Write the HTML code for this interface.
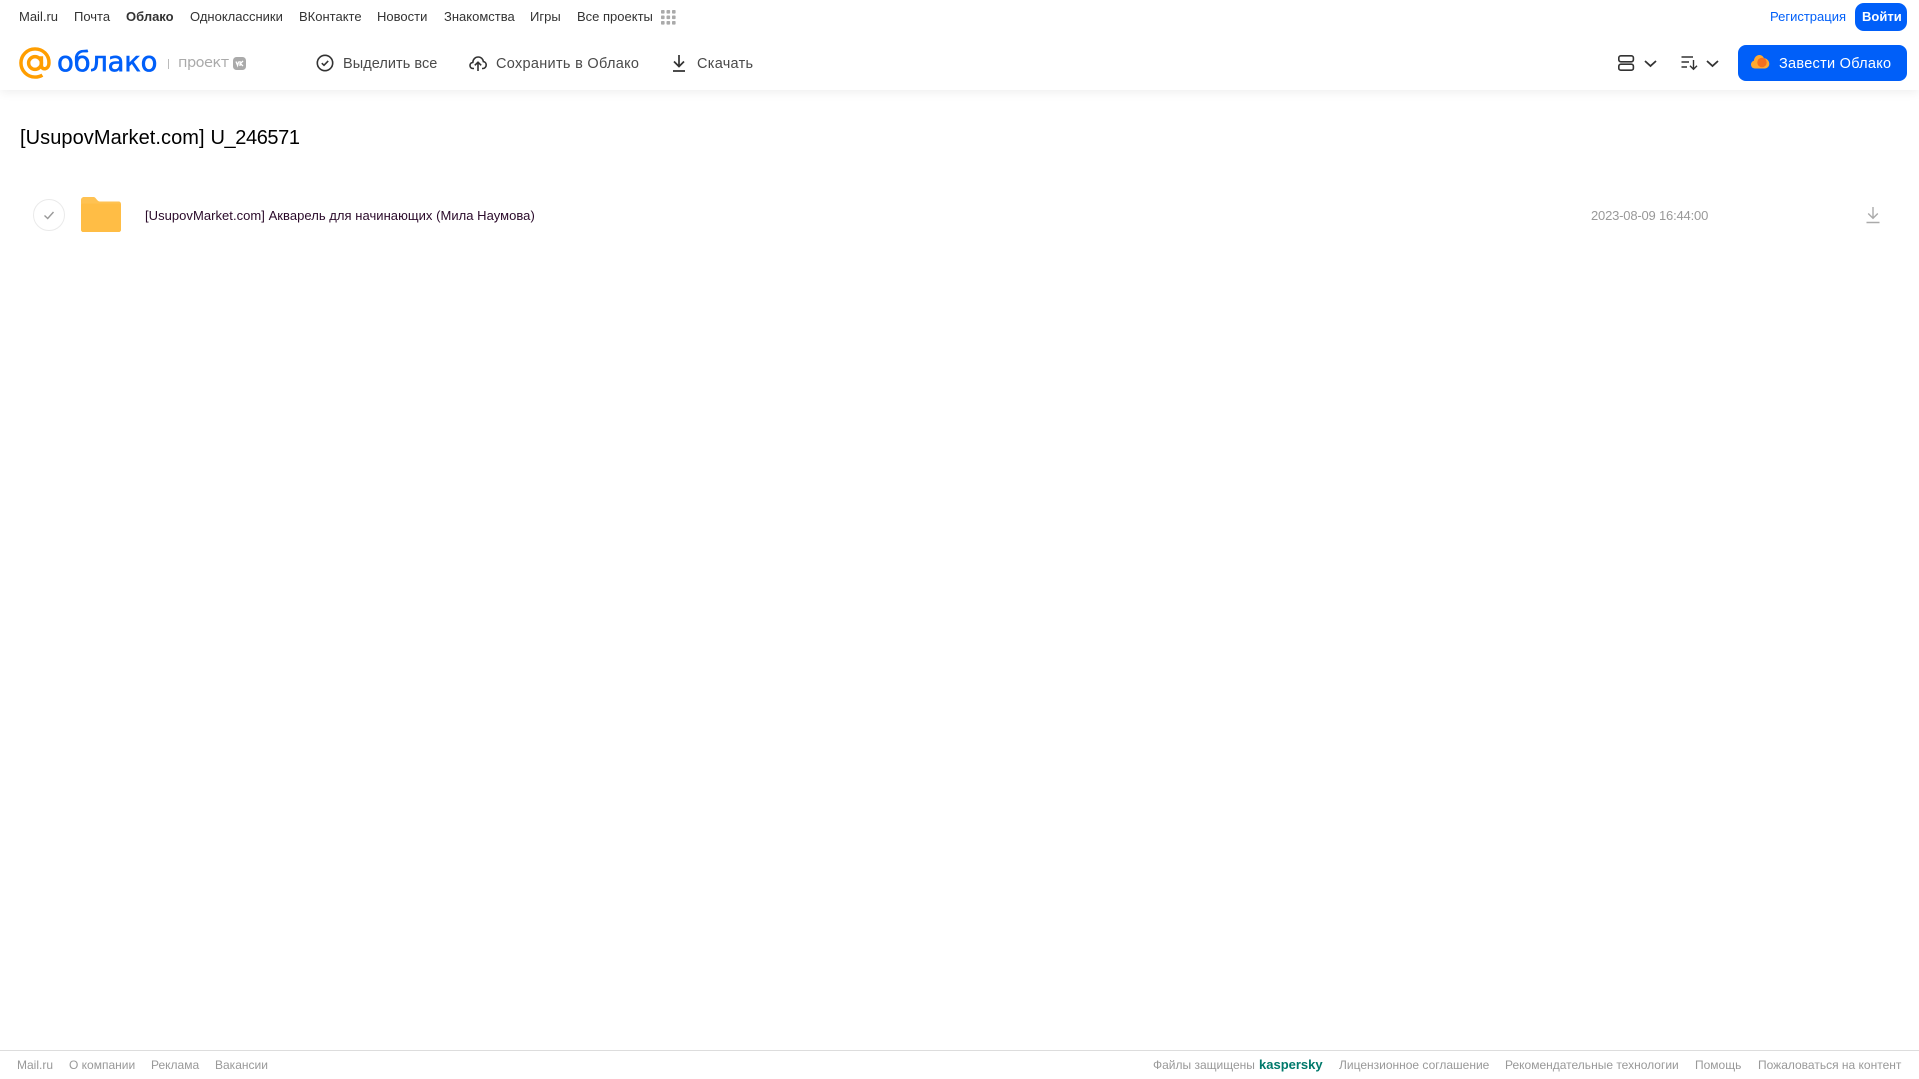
<!DOCTYPE html>
<html lang="ru"><head><meta charset="utf-8"><title>Облако</title>
<style>
html,body{margin:0;padding:0;background:#fff}
body{width:1919px;height:1079px;position:relative;overflow:hidden;font-family:"Liberation Sans","Noto Sans CJK SC",sans-serif}
.t{position:absolute;white-space:nowrap;line-height:20px}
.n{top:7px;font-size:13px;color:#333}
.b{top:54px;font-size:14.5px;color:#4a4a4a;letter-spacing:.3px}
.f{top:1055px;font-size:12px;color:#999}
svg{position:absolute;overflow:visible}
#hd{position:absolute;left:0;top:0;width:1919px;height:90px;background:#fff;box-shadow:0 2px 10px rgba(0,0,0,.07)}
</style></head><body>
<div id="hd"></div>
<span class="t n" style="left:19px">Mail.ru</span>
<span class="t n" style="left:74px">Почта</span>
<span class="t n" style="left:126px;font-weight:bold">Облако</span>
<span class="t n" style="left:190px">Одноклассники</span>
<span class="t n" style="left:299px">ВКонтакте</span>
<span class="t n" style="left:377px">Новости</span>
<span class="t n" style="left:444px">Знакомства</span>
<span class="t n" style="left:530px">Игры</span>
<span class="t n" style="left:577px">Все проекты</span>
<svg style="left:661px;top:10px" width="15" height="15" fill="#aaa"><rect x="0" y="0" width="3.6" height="3.6" rx=".8"/><rect x="5.5" y="0" width="3.6" height="3.6" rx=".8"/><rect x="11" y="0" width="3.6" height="3.6" rx=".8"/><rect x="0" y="5.5" width="3.6" height="3.6" rx=".8"/><rect x="5.5" y="5.5" width="3.6" height="3.6" rx=".8"/><rect x="11" y="5.5" width="3.6" height="3.6" rx=".8"/><rect x="0" y="11" width="3.6" height="3.6" rx=".8"/><rect x="5.5" y="11" width="3.6" height="3.6" rx=".8"/><rect x="11" y="11" width="3.6" height="3.6" rx=".8"/></svg>
<span class="t n" style="left:1770px;color:#005ff9">Регистрация</span>
<div style="position:absolute;left:1855px;top:3px;width:52px;height:28px;border-radius:9px;background:#005ff9"></div>
<span class="t n" style="left:1862px;color:#fff;font-weight:bold">Войти</span>

<svg style="left:19px;top:47px" width="32" height="32" viewBox="0 0 33 33" fill="none" stroke="#ff9e00" stroke-width="3.6"><circle cx="16.5" cy="16.5" r="6.6"/><path d="M23.1 9.5v9.5c0 5 7.6 5 7.8-2.5C31.2 8 24.5 2 16.5 2 8.5 2 2 8.5 2 16.5S8.5 31 16.5 31c3 0 5.5-.7 7.6-2"/></svg>
<span class="t" style="left:57px;top:46px;font-size:27.5px;line-height:32px;color:#005ff9;font-family:'DejaVu Sans',sans-serif;letter-spacing:-.25px;-webkit-text-stroke:.6px #005ff9">облако</span>
<div style="position:absolute;left:168px;top:59px;width:1px;height:10px;background:#bbb"></div>
<span class="t" style="left:178px;top:53px;font-size:14.5px;color:#aaa;font-family:'DejaVu Sans',sans-serif;letter-spacing:-.5px">проект</span>
<div style="position:absolute;left:233px;top:57px;width:13px;height:13px;border-radius:3.5px;background:#aaa"></div>
<svg style="left:233px;top:57px" width="13" height="13" fill="none" stroke="#fff" stroke-width="1.3"><path d="M3 4.500 4.600 8.500 5.600 4.500M7 4v5M10 4 7.400 6.600 10 9"/></svg>

<svg style="left:316px;top:54px" width="18" height="18" viewBox="0 0 18 18" fill="none" stroke="#333" stroke-width="1.6"><circle cx="9" cy="9" r="7.7"/><path d="M5.800 9.200 8 11.300 12.200 6.900"/></svg>
<span class="t b" style="left:343px;letter-spacing:.05px">Выделить все</span>
<svg style="left:469px;top:54px" width="18" height="18" viewBox="0 0 18 18" fill="none" stroke="#333" stroke-width="1.6"><path d="M5 14.500H4C2 14.500 1 13 1 11.400 1 9.700 2.300 8.500 3.800 8.400 4 5 6.500 3 9.200 3c2.800 0 4.800 2 5.200 4.600 1.700.2 2.800 1.700 2.800 3.300 0 1.900-1.300 3.600-3.200 3.600H13"/><path d="M9 17V8.500M5.800 11.300 9 8.200l3.200 3.100"/></svg>
<span class="t b" style="left:496px">Сохранить в Облако</span>
<svg style="left:671px;top:54px" width="16" height="18" viewBox="0 0 16 18" fill="none" stroke="#333" stroke-width="1.7"><path d="M8 1v11M3 7.500 8 12.500 13 7.500M2 17H14"/></svg>
<span class="t b" style="left:697px;letter-spacing:.28px">Скачать</span>

<svg style="left:1618px;top:55px" width="16" height="16" fill="none" stroke="#333" stroke-width="1.6"><rect x=".8" y=".8" width="14.600" height="6" rx="2"/><rect x=".8" y="9.200" width="14.600" height="6" rx="2"/></svg>
<svg style="left:1644px;top:60px" width="13" height="8" fill="none" stroke="#333" stroke-width="1.8"><path d="M1 1 6.500 6 12 1"/></svg>
<svg style="left:1681px;top:55px" width="17" height="16" fill="none" stroke="#333" stroke-width="1.4"><path d="M.5 2H12M.5 7H8M.5 12H6M12.500 5V14M9 10.700 12.500 14.200 16 10.700"/></svg>
<svg style="left:1706px;top:60px" width="13" height="8" fill="none" stroke="#333" stroke-width="1.8"><path d="M1 1 6.500 6 12 1"/></svg>
<div style="position:absolute;left:1738px;top:45px;width:169px;height:36px;border-radius:8px;background:#005ff9"></div>
<svg style="left:1750px;top:53px" width="20" height="18" viewBox="0 0 20 18"><path d="M5 15.500C2.500 15.500 1 13.700 1 11.500 1 9.700 2.300 8.200 3.800 7.900 4.300 4.500 6.500 2 9.200 2c2.300 0 4 1.300 4.800 3.300 3 .2 5.300 2.700 5.300 5.500 0 2.700-2 4.700-4.600 4.700z" fill="#ffa930"/><circle cx="12" cy="9.500" r="4.700" fill="#f5701f"/></svg>
<span class="t b" style="left:1779px;color:#fff;letter-spacing:.28px">Завести Облако</span>

<span class="t" style="left:20px;top:126px;line-height:24px;font-size:20px;color:#000;letter-spacing:.07px">[UsupovMarket.com]</span>
<span class="t" style="left:210.500px;top:126px;line-height:24px;font-size:20px;color:#000;letter-spacing:-.4px">U_246571</span>
<svg style="left:33px;top:199px" width="32" height="32" fill="none"><circle cx="16" cy="16" r="15.500" stroke="#eaeaea"/><path d="M11.500 16.500 14.700 19.500 20.500 13" stroke="#999" stroke-width="1.400"/></svg>
<svg style="left:81px;top:197px" width="40" height="35" viewBox="0 0 40 35"><path d="M0 3C0 1.300 1.300 0 3 0H12C14 0 14.500 1 15.500 2.200 16.500 3.500 17.500 4.500 19 4.500H37.500C39 4.500 40 5.500 40 7V32.500C40 34 39 35 37.500 35H2.500C1 35 0 34 0 32.500Z" fill="#ffc252"/><path d="M0 8.500C0 7.500 1 6.500 2 6.500H38C39 6.500 40 7.500 40 8.500V32.500C40 34 39 35 37.500 35H2.500C1 35 0 34 0 32.500Z" fill="#ffbd45"/></svg>
<span class="t" style="left:145px;top:206px;font-size:13px;color:#2a0a2a;letter-spacing:.04px">[UsupovMarket.com] Акварель для начинающих (Мила Наумова)</span>
<span class="t" style="left:1591px;top:206px;font-size:13px;color:#999;letter-spacing:-.19px">2023-08-09 16:44:00</span>
<svg style="left:1866px;top:206px" width="14" height="18" fill="none" stroke="#aaa" stroke-width="1.400"><path d="M7 1V12M2.200 7.500 7 12.300 11.800 7.500M.5 16.500H13.500" /></svg>

<div style="position:absolute;left:0;top:1050px;width:1919px;height:1px;background:#ddd"></div>
<span class="t f" style="left:17px">Mail.ru</span>
<span class="t f" style="left:69px">О компании</span>
<span class="t f" style="left:151px">Реклама</span>
<span class="t f" style="left:215px">Вакансии</span>
<span class="t f" style="left:1153px">Файлы защищены</span>
<span class="t f" style="left:1259px;color:#00796b;font-weight:bold;font-size:13px">kaspersky</span>
<span class="t f" style="left:1339px">Лицензионное соглашение</span>
<span class="t f" style="left:1505px">Рекомендательные технологии</span>
<span class="t f" style="left:1695px">Помощь</span>
<span class="t f" style="left:1758px">Пожаловаться на контент</span>
</body></html>
